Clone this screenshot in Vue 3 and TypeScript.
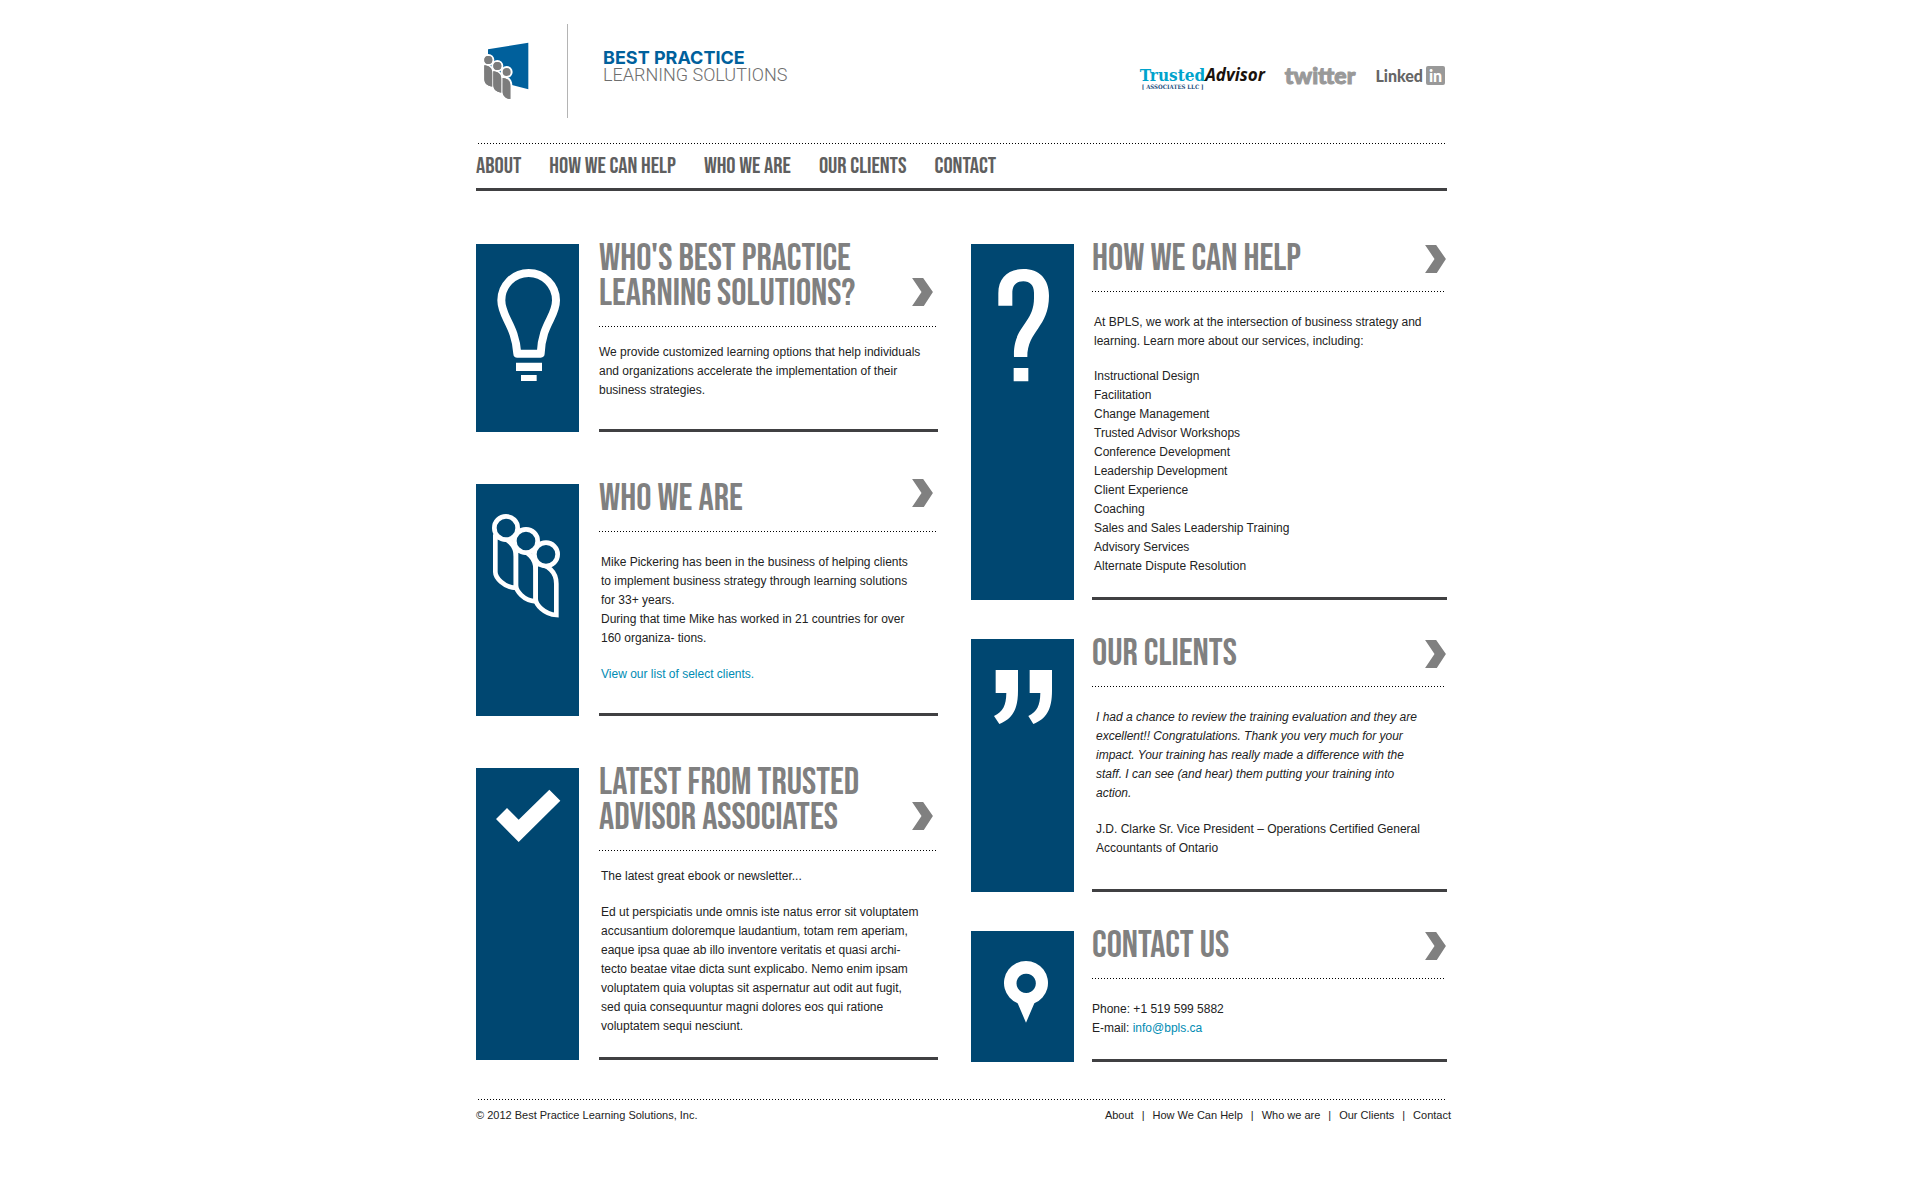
<script setup lang="ts">
interface Link {
  label: string
  href: string
}

const mainLinks: Link[] = [
  { label: 'About', href: '#about' },
  { label: 'How We Can Help', href: '#help' },
  { label: 'Who We Are', href: '#who' },
  { label: 'Our Clients', href: '#clients' },
  { label: 'Contact', href: '#contact' },
]

const footerLinks: Link[] = [
  { label: 'About', href: '#about' },
  { label: 'How We Can Help', href: '#help' },
  { label: 'Who we are', href: '#who' },
  { label: 'Our Clients', href: '#clients' },
  { label: 'Contact', href: '#contact' },
]

const services: string[] = [
  'Instructional Design',
  'Facilitation',
  'Change Management',
  'Trusted Advisor Workshops',
  'Conference Development',
  'Leadership Development',
  'Client Experience',
  'Coaching',
  'Sales and Sales Leadership Training',
  'Advisory Services',
  'Alternate Dispute Resolution',
]

const arrow = 'M0 0H34L64 43L36 86H0L29 43Z'
</script>

<template>
  <div class="page">
    <header class="masthead">
      <a class="brand" href="#top" aria-label="Best Practice Learning Solutions">
        <svg class="brand-mark" viewBox="50 95 138 174" aria-hidden="true">
          <path fill="#00609c" d="M65 117L186 97V237L65 205Z" />
          <g fill="#7c7c7c" stroke="#fff" stroke-width="12" paint-order="stroke">
            <path d="M54 165C70 166 78 176 78 188V229C63 227 54 219 54 206Z" />
            <circle cx="66" cy="149" r="12" />
            <path d="M81 183C97 184 105 194 105 206V247C90 245 81 237 81 224Z" />
            <circle cx="93" cy="167" r="12" />
            <path d="M109 203C124 204 132 212 132 226V266C117 264 109 256 109 244Z" />
            <circle cx="121" cy="185" r="12" />
          </g>
          <g fill="#7c7c7c">
            <path d="M54 165C70 166 78 176 78 188V229C63 227 54 219 54 206Z" />
            <path d="M81 183C97 184 105 194 105 206V247C90 245 81 237 81 224Z" />
            <path d="M109 203C124 204 132 212 132 226V266C117 264 109 256 109 244Z" />
            <circle cx="66" cy="149" r="12" />
            <circle cx="93" cy="167" r="12" />
          </g>
        </svg>
        <span class="brand-name">
          <strong>BEST PRACTICE</strong>
          <span>LEARNING SOLUTIONS</span>
        </span>
      </a>
      <div class="partners">
        <a class="trusted" href="#trusted-advisor">
          <span class="trusted-name"><span>Trusted</span><em>Advisor</em></span>
          <small>[ ASSOCIATES LLC ]</small>
        </a>
        <a class="twitter" href="#twitter">twitter</a>
        <a class="linkedin" href="#linkedin">Linked<span>in</span></a>
      </div>
    </header>

    <div class="dots dots-wide"></div>
    <nav class="main-nav" aria-label="Main">
      <a v-for="link in mainLinks" :key="link.href" :href="link.href">{{ link.label }}</a>
    </nav>

    <main class="columns">
      <div class="column column-left">
        <section id="about" class="card card-double">
          <div class="tile">
            <svg viewBox="30 42 309 420" aria-hidden="true">
              <path fill="none" stroke="#fff" stroke-width="24" stroke-linejoin="round" d="M106 211A82 82 0 0 1 270 211C270 262 228 280 224 371H154C148 285 106 262 106 211Z" />
              <path fill="#fff" d="M150 398H228V423H150ZM165 435H212V453H165Z" />
            </svg>
          </div>
          <div class="content">
            <div class="heading">
              <h2>Who's Best Practice<br />Learning Solutions?</h2>
              <a class="more" href="#about" aria-label="More about us"><svg viewBox="0 0 64 86"><path :d="arrow" /></svg></a>
            </div>
            <div class="dots"></div>
            <div class="text flush">
              <p>We provide customized learning options that help individuals<br />and organizations accelerate the implementation of their<br />business strategies.</p>
            </div>
          </div>
        </section>

        <section id="who" class="card">
          <div class="tile">
            <svg viewBox="30 72 309 420" aria-hidden="true">
              <g fill="#004771" stroke="#fff" stroke-width="14">
                <path d="M88 230C125 232 150 255 150 290V384C112 382 88 352 88 336Z" />
                <path d="M150 270C187 272 209 295 209 330V424C172 422 150 392 150 376Z" />
                <path d="M209 311C246 313 271 336 271 371V465C234 463 209 433 209 417Z" />
                <circle cx="240" cy="283" r="35" />
                <circle cx="180" cy="243" r="35" />
                <circle cx="120" cy="204" r="35" />
              </g>
            </svg>
          </div>
          <div class="content">
            <div class="heading">
              <h2>Who We Are</h2>
              <a class="more raised" href="#who" aria-label="More about who we are"><svg viewBox="0 0 64 86"><path :d="arrow" /></svg></a>
            </div>
            <div class="dots"></div>
            <div class="text">
              <p>Mike Pickering has been in the business of helping clients<br />to implement business strategy through learning solutions<br />for 33+ years.<br />During that time Mike has worked in 21 countries for over<br />160 organiza- tions.</p>
              <p><a href="#clients">View our list of select clients.</a></p>
            </div>
          </div>
        </section>

        <section id="latest" class="card card-double card-snug">
          <div class="tile">
            <svg viewBox="30 54 309 300" aria-hidden="true">
              <path fill="#fff" d="M90 207L123 174L158 209L250 119L283 152L158 276Z" />
            </svg>
          </div>
          <div class="content">
            <div class="heading">
              <h2>Latest from Trusted<br />Advisor Associates</h2>
              <a class="more" href="#latest" aria-label="More from Trusted Advisor Associates"><svg viewBox="0 0 64 86"><path :d="arrow" /></svg></a>
            </div>
            <div class="dots"></div>
            <div class="text">
              <p>The latest great ebook or newsletter...</p>
              <p>Ed ut perspiciatis unde omnis iste natus error sit voluptatem<br />accusantium doloremque laudantium, totam rem aperiam,<br />eaque ipsa quae ab illo inventore veritatis et quasi archi-<br />tecto beatae vitae dicta sunt explicabo. Nemo enim ipsam<br />voluptatem quia voluptas sit aspernatur aut odit aut fugit,<br />sed quia consequuntur magni dolores eos qui ratione<br />voluptatem sequi nesciunt.</p>
            </div>
          </div>
        </section>
      </div>

      <div class="column column-right">
        <section id="help" class="card card-snug">
          <div class="tile">
            <svg viewBox="33 42 309 420" aria-hidden="true">
              <path fill="#fff" d="M115 227V190C115 142 145 117 190 117C238 117 267 147 267 197C267 292 202 302 202 381H162C158 288 222 282 222 205V188C222 166 210 154 190 154C168 154 157 167 157 190V227ZM161 414H205V454H161Z" />
            </svg>
          </div>
          <div class="content">
            <div class="heading">
              <h2>How We Can Help</h2>
              <a class="more" href="#help" aria-label="More about how we can help"><svg viewBox="0 0 64 86"><path :d="arrow" /></svg></a>
            </div>
            <div class="dots"></div>
            <div class="text">
              <p>At BPLS, we work at the intersection of business strategy and<br />learning. Learn more about our services, including:</p>
              <ul>
                <li v-for="service in services" :key="service">{{ service }}</li>
              </ul>
            </div>
          </div>
        </section>

        <section id="clients" class="card card-roomy">
          <div class="tile">
            <svg viewBox="33 45 309 300" aria-hidden="true">
              <path fill="#fff" d="M107 138H174V200C174 255 158 284 118 300L102 276C130 262 138 245 139 207H107ZM209 138H276V200C276 255 260 284 220 300L205 276C232 262 240 245 241 207H209Z" />
            </svg>
          </div>
          <div class="content">
            <div class="heading">
              <h2>Our Clients</h2>
              <a class="more" href="#clients" aria-label="More about our clients"><svg viewBox="0 0 64 86"><path :d="arrow" /></svg></a>
            </div>
            <div class="dots"></div>
            <div class="text quote">
              <p><em>I had a chance to review the training evaluation and they are<br />excellent!! Congratulations. Thank you very much for your<br />impact. Your training has really made a difference with the<br />staff. I can see (and hear) them putting your training into<br />action.</em></p>
              <p>J.D. Clarke Sr. Vice President – Operations Certified General<br />Accountants of Ontario</p>
            </div>
          </div>
        </section>

        <section id="contact" class="card card-snug">
          <div class="tile">
            <svg viewBox="33 51 309 300" aria-hidden="true">
              <path fill="#fff" fill-rule="evenodd" d="M198 326L173 268A66 66 0 1 1 223 268ZM198 179A29 29 0 1 0 199 179Z" />
            </svg>
          </div>
          <div class="content">
            <div class="heading">
              <h2>Contact Us</h2>
              <a class="more" href="#contact" aria-label="More contact details"><svg viewBox="0 0 64 86"><path :d="arrow" /></svg></a>
            </div>
            <div class="dots"></div>
            <div class="text flush">
              <p>Phone: +1 519 599 5882<br />E-mail: <a href="mailto:info@bpls.ca">info@bpls.ca</a></p>
            </div>
          </div>
        </section>
      </div>
    </main>

    <div class="dots dots-wide"></div>
    <footer class="footer">
      <span>© 2012 Best Practice Learning Solutions, Inc.</span>
      <nav class="footer-nav" aria-label="Footer">
        <template v-for="(link, index) in footerLinks" :key="link.href">
          <span v-if="index > 0">|</span>
          <a :href="link.href">{{ link.label }}</a>
        </template>
      </nav>
    </footer>
  </div>
</template>

<style>
body {
  background: #fff;
}
</style>

<style scoped>
.page {
  box-sizing: border-box;
  max-width: 974px;
  margin: 0 auto;
  padding: 24px 0 60px 3px;
  color: #222;
  font-family: "Liberation Sans", Arial, sans-serif;
  font-size: 12px;
  line-height: 19px;
}

a {
  color: inherit;
  text-decoration: none;
}

h2,
p,
ul {
  margin: 0;
  padding: 0;
}

svg {
  display: block;
}

.dots {
  height: 1px;
  margin-right: 2px;
  background: repeating-linear-gradient(to right, #000 0 1px, transparent 1px 3px);
}

.dots-wide {
  margin-left: 2px;
}

/* Masthead */
.masthead {
  display: flex;
  justify-content: space-between;
  height: 119px;
}

.brand {
  display: flex;
  align-items: flex-start;
}

.brand-mark {
  width: 46px;
  height: 58px;
  margin: 18px 38px 0 7px;
}

.brand-name {
  display: flex;
  flex-direction: column;
  box-sizing: border-box;
  height: 94px;
  padding: 25px 0 0 35px;
  border-left: 1px solid #b4b4b4;
  font-family: Roboto, sans-serif;
  font-size: 18px;
  font-weight: 300;
  line-height: 17px;
  color: #6e6e6e;
}

.brand-name strong {
  font-family: Inter, sans-serif;
  font-weight: 700;
  color: #00609c;
}

.partners {
  display: flex;
  align-items: flex-start;
  gap: 20px;
  padding: 42px 2px 0 0;
}

.trusted {
  display: flex;
  flex-direction: column;
}

.trusted-name {
  font-family: "DejaVu Serif Condensed", "DejaVu Serif", serif;
  font-size: 17px;
  line-height: 18px;
  font-weight: 700;
  color: #00a3cc;
}

.trusted-name em {
  font-family: "Open Sans", sans-serif;
  color: #1a120c;
}

.trusted small {
  padding-left: 2px;
  font-family: "DejaVu Serif Condensed", "DejaVu Serif", serif;
  font-size: 6px;
  line-height: 6px;
  font-weight: 700;
  color: #1d5080;
}

.twitter {
  font-family: Lato, sans-serif;
  font-size: 23px;
  line-height: 19px;
  font-weight: 900;
  color: #999;
  -webkit-text-stroke: 1px #999;
}

.linkedin {
  display: flex;
  gap: 3px;
  font-family: Lato, sans-serif;
  font-size: 16px;
  line-height: 19px;
  font-weight: 900;
  color: #666;
}

.linkedin span {
  width: 19px;
  border-radius: 2px;
  background: #999;
  color: #fff;
  text-align: center;
}

/* Main navigation */
.main-nav {
  display: flex;
  gap: 28px;
  padding: 11px 0;
  border-bottom: 3px solid #404042;
  font-family: "Bebas Neue", Oswald, "Roboto Condensed", "Liberation Sans Narrow", sans-serif;
  font-size: 23px;
  line-height: 22px;
  font-weight: 400;
  text-transform: uppercase;
  color: #5f5f5f;
}

/* Card columns */
.columns {
  display: grid;
  grid-template-columns: 462fr 476fr;
  gap: 33px;
  padding: 53px 0 37px;
}

.column {
  display: flex;
  flex-direction: column;
}

.column-left {
  gap: 52px;
}

.column-right {
  gap: 39px;
}

.card {
  display: flex;
  gap: 20px;
}

.column-right .card {
  gap: 18px;
}

.tile {
  flex: 0 0 103px;
  background: #004771;
}

.content {
  flex: 1;
  min-width: 0;
  border-bottom: 3px solid #404042;
}

.heading {
  display: flex;
  justify-content: space-between;
  align-items: flex-end;
}

.heading h2 {
  margin-top: -3px;
  padding-bottom: 15px;
  font-family: "Bebas Neue", Oswald, "Roboto Condensed", "Liberation Sans Narrow", sans-serif;
  font-size: 38px;
  line-height: 35px;
  font-weight: 400;
  text-transform: uppercase;
  white-space: nowrap;
  color: #808080;
}

.more {
  padding: 0 5px 20px 0;
}

.more.raised {
  margin-top: -5px;
  padding-bottom: 24px;
}

.column-right .more {
  padding: 0 1px 18px 0;
}

.more svg {
  width: 21px;
  height: 28px;
  fill: #808080;
}

.text {
  padding: 21px 0 29px 2px;
}

.card-double .text {
  padding-top: 16px;
}

.card-snug .text {
  padding-bottom: 21px;
}

.card-roomy .text {
  padding-bottom: 31px;
}

.text.flush {
  padding-left: 0;
}

.text.quote {
  padding-left: 4px;
}

.text p + p {
  margin-top: 17px;
}

.text ul {
  margin-top: 16px;
  list-style: none;
}

.text a {
  color: #008bb3;
}

/* Footer */
.footer {
  display: flex;
  justify-content: space-between;
  padding-top: 6px;
  font-size: 11px;
}

.footer-nav {
  display: flex;
  gap: 8px;
  margin-right: -4px;
}
</style>
